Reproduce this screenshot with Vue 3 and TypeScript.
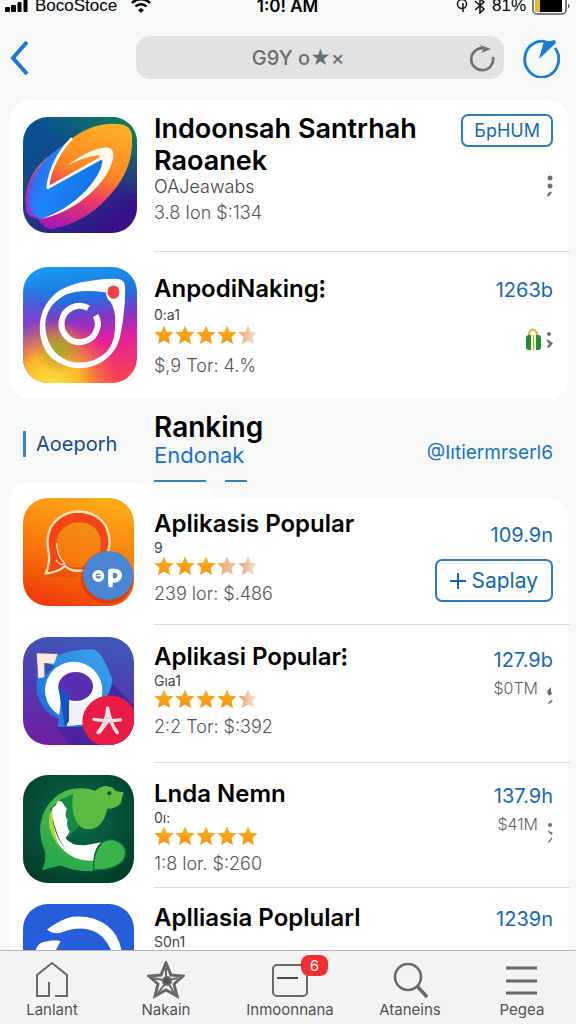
<script setup lang="ts">
type StarKind = 'full' | 'soft' | 'half'
type DotKind = 'three' | 'bag' | 'blob' | 'curl'

interface AppRow {
  id: string
  title: string
  sub: string
  stars: StarKind[]
  meta: string
  count?: string
  price?: string
  action?: string
  plus?: boolean
  dots?: DotKind
}

const featured: AppRow[] = [
  { id: 'swoosh', title: 'Indoonsah Santrhah Raoanek', sub: 'OAJeawabs', stars: [], meta: '3.8 Ion $:134', action: 'БpHUM', dots: 'three' },
  { id: 'camera', title: 'AnpodiNaking⁝', sub: '0:a1', stars: ['full', 'full', 'full', 'full', 'half'], meta: '$,9 Tor: 4.%', count: '1263b', dots: 'bag' },
]

const ranking: AppRow[] = [
  { id: 'chat', title: 'Aplikasis Popular', sub: '9', stars: ['full', 'full', 'full', 'soft', 'half'], meta: '239 lor: $.486', count: '109.9n', action: 'Saplay', plus: true },
  { id: 'ring', title: 'Aplikasi Popular⁝', sub: 'Gıa1', stars: ['full', 'full', 'full', 'full', 'half'], meta: '2:2 Tor: $:392', count: '127.9b', price: '$0TM', dots: 'blob' },
  { id: 'beast', title: 'Lnda Nemn', sub: '0ı:', stars: ['full', 'full', 'full', 'full', 'full'], meta: '1:8 lor. $:260', count: '137.9h', price: '$41M', dots: 'curl' },
  { id: 'wave', title: 'Aplliasia Poplularl', sub: 'S0n1', stars: ['full', 'full', 'full', 'full', 'full'], meta: '', count: '1239n' },
]

const sections = [
  { key: 'featured', rows: featured },
  { key: 'ranking', rows: ranking },
]

const tabs = [
  { id: 'home', label: 'Lanlant' },
  { id: 'star', label: 'Nakain' },
  { id: 'box', label: 'Inmoonnana', badge: '6' },
  { id: 'search', label: 'Ataneins' },
  { id: 'menu', label: 'Pegea' },
]

const starFill: Record<StarKind, string> = {
  full: 'url(#star-full)',
  soft: 'url(#star-soft)',
  half: 'url(#star-half)',
}
</script>

<template>
  <div class="app">
    <svg class="defs" width="0" height="0" aria-hidden="true">
      <defs>
        <linearGradient id="star-full" x1="0" y1="0" x2="0" y2="1"><stop offset="0" stop-color="#fbb023" /><stop offset="1" stop-color="#f7920f" /></linearGradient>
        <linearGradient id="star-soft"><stop offset="0" stop-color="#f2a468" /><stop offset="1" stop-color="#f3c9a4" /></linearGradient>
        <linearGradient id="star-half"><stop offset="0" stop-color="#ee9f58" /><stop offset=".5" stop-color="#efc5a4" /><stop offset="1" stop-color="#f1ebe8" /></linearGradient>
      </defs>
    </svg>

    <div class="status">
      <div class="status-side">
        <svg class="signal" viewBox="0 0 24 12" width="24" height="12" aria-hidden="true">
          <rect x="0" y="7" width="5" height="5" rx="1" /><rect x="6" y="5" width="5" height="7" rx="1" /><rect x="12.500" y="2" width="4" height="10" rx="1" /><rect x="18.500" y="-2" width="4" height="14" rx="1" />
        </svg>
        <span>BocoStoce</span>
        <svg class="wifi" viewBox="0 0 20 13" width="20" height="13" fill="none" stroke="#000" aria-hidden="true">
          <path d="M1 3C6-2 14-2 19 3" stroke-width="2.400" /><path d="M4.500 6.500c3-3 8-3 11 0" stroke-width="2.400" /><path d="M10 8l3 2-3 3-3-3z" fill="#000" stroke="none" />
        </svg>
      </div>
      <strong class="clock">1:0! AM</strong>
      <div class="status-side status-end">
        <svg viewBox="0 0 12 13" width="12" height="13" fill="none" stroke="#111" stroke-width="1.500" aria-hidden="true"><circle cx="6" cy="4" r="4.500" /><path d="M7 3v9" /></svg>
        <svg viewBox="0 0 12 14" width="12" height="14" fill="none" stroke="#111" stroke-width="1.500" aria-hidden="true"><path d="M1 1l9 8-4 4V-1l4 3-9 8" /></svg>
        <span>81%</span>
        <svg class="battery" viewBox="0 0 38 16" width="38" height="16" aria-hidden="true">
          <rect x="1" y="-6" width="33" height="20" rx="4" fill="#fff" stroke="#555" stroke-width="1.500" /><rect x="3" y="-4" width="6" height="16" fill="#e3bd24" /><rect x="8" y="-4" width="22" height="16" fill="#000" /><path d="M36 4c2 0 2 4 0 4z" fill="#555" />
        </svg>
      </div>
    </div>

    <header class="nav">
      <button class="back" type="button" aria-label="Back">
        <svg viewBox="0 0 20 36" width="20" height="36" fill="none" stroke="#1b78d3" stroke-width="4"><path d="M17 2L3 18l14 16" /></svg>
      </button>
      <div class="search">
        <input type="text" aria-label="Search" value="G9Y o★×" />
        <button class="reload" type="button" aria-label="Reload">
          <svg viewBox="0 0 26 28" width="26" height="28"><path d="M16 4.500A11 11 0 1 0 24 13" fill="none" stroke="#6f7072" stroke-width="2.600" /><path d="M10 0.500l12 4.500-10 4 3-4z" fill="#6f7072" /></svg>
        </button>
      </div>
      <button class="compass" type="button" aria-label="Browse">
        <svg viewBox="0 0 38 40" width="38" height="40"><path d="M28 5.500A17 18 0 1 0 33 10" fill="none" stroke="#1b7ed6" stroke-width="2.800" /><path d="M17 21L22 3h6l5-1 1 3z" fill="#1b7ed6" /></svg>
      </button>
    </header>

    <main class="content">
      <template v-for="section in sections" :key="section.key">
        <div v-if="section.key === 'ranking'" class="heading">
          <a class="side-link" href="#all">Aoeporh</a>
          <div class="heading-main">
            <h2>Ranking</h2>
            <a href="#endonak">Endonak</a>
            <div class="rules"><i></i><i></i></div>
          </div>
          <a class="handle" href="#handle">@Iıtiermrserl6</a>
        </div>

        <section class="card" :class="section.key">
          <article v-for="row in section.rows" :key="row.id" class="row" :class="row.id">
            <div class="icon">
              <svg v-if="row.id === 'swoosh'" viewBox="69 64 342 349" preserveAspectRatio="none" aria-hidden="true">
                <defs>
                  <linearGradient id="sw-bg" x1="0" y1="0" x2=".7" y2="1"><stop offset="0" stop-color="#04559a" /><stop offset=".5" stop-color="#174583" /><stop offset="1" stop-color="#38108a" /></linearGradient>
                  <linearGradient id="sw-gr" x1="0" y1=".8" x2="1" y2="0"><stop offset=".4" stop-color="#127e62" stop-opacity="0" /><stop offset="1" stop-color="#0b8a45" /></linearGradient>
                  <linearGradient id="sw-or" x1=".6" y1="0" x2=".3" y2="1"><stop offset="0" stop-color="#fdab25" /><stop offset=".42" stop-color="#fb8423" /><stop offset=".65" stop-color="#ef3a62" /><stop offset="1" stop-color="#a717b5" /></linearGradient>
                  <linearGradient id="sw-bl" x1="0" y1=".3" x2=".8" y2=".6"><stop offset="0" stop-color="#4b53e4" /><stop offset=".4" stop-color="#1b86fa" /><stop offset="1" stop-color="#1376ea" /></linearGradient>
                </defs>
                <rect x="69" y="64" width="342" height="349" fill="url(#sw-bg)" /><rect x="69" y="64" width="342" height="230" fill="url(#sw-gr)" />
                <path d="M108 365Q70 350 77 300Q88 224 150 180Q192 148 200 140Q276 77 356 85Q398 88 396 130Q400 220 330 299Q258 383 152 402Q132 400 108 365z" fill="url(#sw-or)" />
                <path d="M80 350Q70 270 125 205Q160 166 200 142Q150 205 143 278L310 187Q310 232 262 290Q200 350 123 370Q94 370 80 350z" fill="url(#sw-bl)" />
                <path d="M80 350Q69 282 115 215Q79 274 88 328Q96 366 123 369Q94 372 80 350z" fill="#a829d2" />
                <path d="M216 128Q152 195 143 277L303 188" fill="none" stroke="#fff9ec" stroke-width="8" stroke-linejoin="round" />
                <path d="M203 209Q270 160 318 155Q344 156 340 186Q328 243 270 295Q205 353 123 371Q200 345 258 285Q303 236 308 196L296 190Q304 178 292 179Q260 182 203 209z" fill="#fff9ec" />
              </svg>

              <svg v-else-if="row.id === 'camera'" viewBox="69 51 339 347" preserveAspectRatio="none" aria-hidden="true">
                <defs>
                  <linearGradient id="cm-bg" x1=".5" y1="0" x2=".65" y2="1"><stop offset="0" stop-color="#1698ec" /><stop offset=".27" stop-color="#246de0" /><stop offset=".45" stop-color="#8734c5" /><stop offset=".65" stop-color="#e61f9b" /><stop offset="1" stop-color="#fb4454" /></linearGradient>
                  <radialGradient id="cm-ye" cx=".25" cy="1.02" r=".58"><stop offset="0" stop-color="#ffe43a" /><stop offset=".45" stop-color="#fbb62a" /><stop offset="1" stop-color="#f08024" stop-opacity="0" /></radialGradient>
                  <radialGradient id="cm-gr" cx=".32" cy=".7" r=".22"><stop offset="0" stop-color="#9aae27" /><stop offset="1" stop-color="#b58a33" stop-opacity="0" /></radialGradient>
                  <radialGradient id="cm-le" cx="0" cy=".55" r=".4"><stop offset="0" stop-color="#7b45d4" stop-opacity=".9" /><stop offset="1" stop-color="#9b3ac9" stop-opacity="0" /></radialGradient>
                </defs>
                <rect x="69" y="51" width="339" height="347" fill="url(#cm-bg)" /><rect x="69" y="51" width="339" height="347" fill="url(#cm-le)" /><rect x="69" y="51" width="339" height="347" fill="url(#cm-ye)" /><rect x="69" y="51" width="339" height="347" fill="url(#cm-gr)" />
                <path fill-rule="evenodd" d="M347 86Q374 86 373 116Q373 180 360 248Q351 304 306 334Q274 354 234 354Q171 349 139 306Q116 270 119 222Q125 159 176 122Q216 99 266 93Q309 85 347 86zM316 127Q240 116 197 133Q137 164 135 225Q137 278 169 311Q202 338 240 337Q287 334 317 305Q345 276 343 213Q344 180 329 155Q316 144 316 127z" fill="#fff" />
                <path d="M263 174A54 54 0 1 0 285 196" fill="none" stroke="#fff" stroke-width="18" /><path d="M265 187l9-13M272 190l15-12" stroke="#4563d6" stroke-width="4" /><ellipse cx="338" cy="126" rx="18" ry="20" fill="#f33f45" />
              </svg>

              <svg v-else-if="row.id === 'chat'" viewBox="67 293 336 328" preserveAspectRatio="none" aria-hidden="true">
                <defs><linearGradient id="ch-bg" x1=".65" y1="0" x2=".35" y2="1"><stop offset="0" stop-color="#fda918" /><stop offset=".5" stop-color="#fc7c0a" /><stop offset="1" stop-color="#f13d0b" /></linearGradient><linearGradient id="ch-in" x1=".6" y1="0" x2=".3" y2="1"><stop offset="0" stop-color="#f28f14" /><stop offset="1" stop-color="#fb720b" /></linearGradient></defs>
                <rect x="67" y="293" width="336" height="328" fill="url(#ch-bg)" />
                <path d="M140 532L195 505L258 513L225 535z" fill="#cf3009" opacity=".25" />
                <path d="M136 522Q150 488 145 460Q135 419 151 382Q180 335 237 334Q297 338 320 383Q339 429 318 474Q291 515 231 514Q211 514 194 499Q175 519 136 522z" fill="#f54516" stroke="#ffe4b8" stroke-width="7" />
                <path d="M167 432Q172 385 218 369Q278 361 298 404Q312 454 284 487Q234 518 195 493Q171 478 167 432z" fill="url(#ch-in)" /><path d="M169 430Q169 469 193 491Q181 502 166 480" fill="none" stroke="#ffe4b8" stroke-width="4" />
                <ellipse cx="322" cy="535" rx="80" ry="79" fill="#c92d0e" opacity=".55" /><ellipse cx="325" cy="528" rx="76" ry="74" fill="#4b86d5" />
                <ellipse cx="295" cy="530" rx="13" ry="13" fill="none" stroke="#fff" stroke-width="10" /><path d="M290 529h14" stroke="#fff" stroke-width="4" /><path fill-rule="evenodd" d="M325 511q8-6 20-3q25 3 21 24q-5 20-27 18l-1 14h-10q-5-2-3-53zm14 9v17q13 2 14-9q-1-9-14-8z" fill="#fff" />
              </svg>

              <svg v-else-if="row.id === 'ring'" viewBox="69 49 333 328" preserveAspectRatio="none" aria-hidden="true">
                <defs><linearGradient id="ri-bg" x1=".6" y1="0" x2=".4" y2="1"><stop offset="0" stop-color="#3f58b8" /><stop offset=".5" stop-color="#513bb0" /><stop offset="1" stop-color="#6e20a4" /></linearGradient><linearGradient id="ri-bl" x1="1" y1="0" x2="0" y2="1"><stop offset="0" stop-color="#3ba7ed" /><stop offset="1" stop-color="#1768d9" /></linearGradient></defs>
                <rect x="69" y="49" width="333" height="328" fill="url(#ri-bg)" /><path d="M335 190L402 255V377H210L170 322z" fill="#46209a" opacity=".75" />
                <path d="M171 105Q225 84 279 86Q296 91 312 119L336 174Q338 200 320 233L260 322H174L177 300Q125 275 110 217V160L120 130z" fill="url(#ri-bl)" />
                <path d="M110 98L173 101L162 130L133 128L133 171L115 174z" fill="#ffe8dc" /><path d="M133 128L166 137L136 165z" fill="#3155b2" />
                <ellipse cx="221" cy="211" rx="86" ry="87" fill="#fff" /><path d="M201 250V320L263 313V245z" fill="#f0f1fb" />
                <ellipse cx="227" cy="199" rx="52" ry="44" fill="#582fb1" /><path d="M174 200Q182 235 182 248L174 322H194L208 250L207 225z" fill="#287ee4" /><path d="M176 202Q192 218 207 221V305L195 322L186 270z" fill="#1551c5" />
                <ellipse cx="329" cy="305" rx="82" ry="78" fill="#e91d43" /><path d="M323 265Q320 308 294 340M323 265Q332 315 352 340M282 299Q323 305 361 301M322 307L298 338" fill="none" stroke="#ffe4e6" stroke-width="10" stroke-linecap="round" />
              </svg>

              <svg v-else-if="row.id === 'beast'" viewBox="69 44 334 321" preserveAspectRatio="none" aria-hidden="true">
                <defs><radialGradient id="be-bg" cx=".5" cy=".4" r=".8"><stop offset="0" stop-color="#076d48" /><stop offset=".5" stop-color="#045039" /><stop offset="1" stop-color="#023421" /></radialGradient><linearGradient id="be-gr" x1=".7" y1="0" x2=".2" y2="1"><stop offset="0" stop-color="#61bf40" /><stop offset="1" stop-color="#24a84a" /></linearGradient></defs>
                <rect x="69" y="44" width="334" height="321" fill="url(#be-bg)" />
                <path d="M126 328Q143 289 132 263Q111 213 128 164Q151 106 209 87Q255 78 286 91Q302 77 319 77Q338 78 347 91L372 96Q366 112 364 127Q347 145 323 144Q315 171 306 184Q288 211 259 204Q228 198 221 158L189 112L151 145L158 216L200 270L285 292L281 329Q231 334 181 313Q156 319 126 328z" fill="url(#be-gr)" />
                <path d="M180 118L222 100Q215 160 238 195L205 230L180 200z" fill="#168a45" />
                <path d="M222 88Q210 145 228 180Q246 213 279 203Q315 190 321 144Q285 150 272 88z" fill="#5abb43" />
                <path d="M157 143L168 133L173 122Q186 118 194 136L201 145Q192 164 203 177Q198 195 210 212L197 231Q213 254 256 253L304 244Q283 262 281 298Q226 303 187 264Q151 223 157 143z" fill="#fff" /><path d="M157 143Q128 194 181 261Q157 211 157 143z" fill="#acd83c" /><path d="M158 170Q161 230 214 283Q174 245 158 170z" fill="#195d35" />
                <path d="M282 326Q278 276 307 244Q339 225 369 252Q388 277 367 302Q338 328 282 326z" fill="#37b54a" stroke="#11713a" stroke-width="4" /><circle cx="329" cy="98" r="6" fill="#17463a" />
              </svg>

              <svg v-else viewBox="69 430 334 321" preserveAspectRatio="none" aria-hidden="true">
                <rect x="69" y="430" width="334" height="321" fill="#245edb" /><path d="M141 506Q181 476 218 468Q280 462 323 495Q366 530 367 590L342 588Q325 535 290 515Q244 491 185 515Q158 521 141 506z" fill="#fff" /><path d="M106 587Q102 544 143 541Q168 535 182 541L153 594z" fill="#fff" />
              </svg>
            </div>

            <div class="info">
              <h3>{{ row.title }}</h3>
              <p class="sub">{{ row.sub }}</p>
              <div v-if="row.stars.length" class="stars" role="img" aria-label="Rating">
                <svg v-for="(kind, i) in row.stars" :key="i" viewBox="0 0 20 20" width="20" height="20">
                  <path d="M10 0.500l2.700 6.200 7 .6-5.200 4.700 1.500 7L10 15.500 4 19l1.500-7L.3 7.300l7-.6z" :fill="starFill[kind]" />
                </svg>
              </div>
              <p class="meta">{{ row.meta }}</p>
            </div>

            <div class="aside">
              <span v-if="row.count" class="count">{{ row.count }}</span>
              <button v-if="row.action" class="action" :class="{ wide: row.plus }" type="button">
                <svg v-if="row.plus" viewBox="0 0 16 16" width="16" height="16" fill="none" stroke="currentColor" stroke-width="2"><path d="M8 0v16M0 8h16" /></svg>{{ row.action }}
              </button>
              <div class="extra">
                <span v-if="row.price">{{ row.price }}</span>
                <svg v-if="row.dots === 'bag'" viewBox="0 0 15 23" width="15" height="23" aria-hidden="true">
                  <path d="M3 8V5q4-7 8 0v3" fill="none" stroke="#e9b33b" stroke-width="2" /><rect x="0" y="7" width="15" height="15" rx="3" fill="#258b3b" /><rect x="5" y="6" width="5" height="17" fill="#fbf3cf" /><path d="M7.500 7v15" stroke="#9cb64d" />
                </svg>
                <button v-if="row.dots" class="more" type="button" :aria-label="'More about ' + row.title">
                  <svg viewBox="0 0 6 22" width="6" height="22" fill="#707070">
                    <template v-if="row.dots === 'three'"><circle cx="3" cy="3" r="2.500" /><circle cx="3" cy="11" r="2.500" /><path d="M0 20q2-4 5-3l-1 2-3 3z" /></template>
                    <template v-else-if="row.dots === 'bag'"><circle cx="2" cy="5" r="2" /><path d="M0 10l6 4-4 5-2-1 2-3-2-3z" /></template>
                    <template v-else-if="row.dots === 'blob'"><path d="M1 4l3-3v4l1 3-3 2-2-4z" /><path d="M1 18q1-4 5-4l-2 3z" /></template>
                    <template v-else><circle cx="3" cy="3" r="2" /><path d="M0 8l6 3-2 2z" /><path d="M1 20l4-5v2l-3 4z" /></template>
                  </svg>
                </button>
              </div>
            </div>
          </article>
        </section>
      </template>
    </main>

    <nav class="tabs" aria-label="Main">
      <button v-for="tab in tabs" :key="tab.id" class="tab" type="button">
        <span class="tab-icon">
          <svg viewBox="0 0 38 38" width="38" height="38" fill="none" stroke="#67686a" stroke-width="2" aria-hidden="true">
            <path v-if="tab.id === 'home'" d="M16 21v14H4V14L19 2l15 12v21H22" />
            <template v-else-if="tab.id === 'star'"><path d="M19 2l5 12 12 1-9 8 3 12-11-6-11 6 3-12-9-8 12-1z" stroke-width="3" /><circle cx="20" cy="20" r="4" fill="#555" /><path d="M19 7v10M31 17l-9 2M11 32l7-9M27 32l-5-9M6 17l10 2" /></template>
            <template v-else-if="tab.id === 'box'"><rect x="2" y="4" width="34" height="31" rx="4" /><path d="M6 17h21" stroke="#47475a" /></template>
            <template v-else-if="tab.id === 'search'"><circle cx="17" cy="16" r="13" stroke-width="2.500" /><path d="M26 25l10 11" stroke-width="3.500" /></template>
            <path v-else d="M3 7h31M3 20h31M3 32h31" stroke-width="3" />
          </svg>
          <span v-if="tab.badge" class="badge">{{ tab.badge }}</span>
        </span>
        <span>{{ tab.label }}</span>
      </button>
    </nav>
  </div>
</template>

<style>
body { margin: 0; }
</style>

<style scoped>
* { box-sizing: border-box; }
.app { height: 100vh; display: flex; flex-direction: column; overflow: hidden; background: #f7f8f8; color: #000; font-family: Inter, "Liberation Sans", sans-serif; }
.defs { position: absolute; }
h2, h3, p { margin: 0; font-weight: inherit; }
button { border: 0; padding: 0; background: none; font: inherit; color: inherit; cursor: pointer; }
a { color: #1973c2; text-decoration: none; }
svg { display: block; flex: none; }

.status { flex: none; height: 24px; padding: 0 6px 0 5px; display: grid; grid-template-columns: 1fr auto 1fr; font: 17px/12px "Liberation Sans", sans-serif; }
.status-side { display: flex; align-items: flex-start; gap: 6px; }
.status-end { justify-content: flex-end; }
.wifi { margin-left: 8px; }
.clock { font: 600 17px/12px Inter, sans-serif; }

.nav { flex: none; height: 76px; padding: 12px 16px 0 10px; display: flex; align-items: flex-start; }
.back { width: 126px; height: 43px; display: flex; align-items: center; }
.search { flex: 1; min-width: 0; height: 43px; padding: 0 9px; display: flex; align-items: center; border-radius: 14px; background: #e1e2e3; }
.search input { flex: 1; min-width: 0; padding: 0 36px 0 18px; border: 0; outline: 0; background: none; text-align: center; color: #6b6c6e; font: 500 20px/28px Inter, "DejaVu Sans", sans-serif; }
.compass { width: 38px; height: 43px; margin-left: 18px; display: flex; align-items: center; }

.content { flex: 1; min-height: 0; overflow: hidden; }
.card { position: relative; margin: 0 8px 0 10px; border-radius: 20px; background: #fff; }
.card.ranking { border-radius: 0 20px 0 0; }
.card.ranking::before { content: ""; position: absolute; left: 0; bottom: 100%; width: 208px; height: 15px; border-radius: 20px 0 0 0; background: #fff; clip-path: polygon(0 0, 132px 0, 144px 100%, 0 100%); }
.card.ranking::after { content: ""; position: absolute; left: 132px; bottom: 100%; width: 76px; height: 15px; background: #fcfcfc; clip-path: polygon(0 0, 66px 0, 76px 100%, 12px 100%); }
.row { position: relative; display: grid; grid-template-columns: 131px minmax(0, 1fr) auto; align-items: start; padding: 0 15px 0 13px; }
.row + .row::before { content: ""; position: absolute; top: 0; left: 144px; right: -2px; height: 1px; background: #d9dadb; }
.icon { width: 111px; height: 108px; overflow: hidden; border-radius: 25px; }
.icon svg { width: 100%; height: 100%; }
.featured .icon { width: 114px; height: 116px; }
h3 { font-size: 24px; line-height: 32px; font-weight: 600; }
.sub { font-size: 14px; line-height: 16px; color: #444; }
.featured .sub { line-height: 20px; }
.stars { display: flex; gap: 1px; }
.meta { margin-top: 6px; font-size: 18px; line-height: 24px; font-weight: 300; color: #555; white-space: nowrap; }
.aside { display: flex; flex-direction: column; align-items: flex-end; }
.count { font-size: 20px; line-height: 24px; color: #1468b5; }
.action { height: 33px; padding: 0 11px; border: 2px solid #2a7cc0; border-radius: 7px; color: #1468b5; font-size: 18px; display: flex; align-items: center; gap: 6px; }
.action.wide { height: 43px; margin-top: 12px; padding: 0 13px; font-size: 21px; }
.extra { margin-top: 6px; display: flex; gap: 9px; font-size: 16px; line-height: 20px; font-weight: 300; color: #606060; }

.swoosh { height: 151px; }
.swoosh .icon { margin-top: 17px; }
.swoosh .info { padding-top: 13px; }
.swoosh h3 { font-size: 27px; }
.swoosh .sub { font-size: 18px; font-weight: 300; }
.swoosh .meta { margin-top: 4px; }
.swoosh .aside { padding-top: 14px; }
.swoosh .extra { margin-top: 28px; }
.camera { height: 148px; }
.camera .icon { margin-top: 16px; }
.camera .info { padding-top: 22px; }
.camera .meta { margin-top: 9px; }
.camera .aside { padding-top: 27px; }
.camera .extra { margin-top: 26px; gap: 6px; }
.chat { height: 126px; }
.chat .info { padding-top: 10px; }
.chat .aside { padding-top: 25px; }
.ring { height: 138px; }
.ring .icon { margin-top: 13px; }
.ring .info { padding-top: 17px; }
.ring .aside { padding-top: 24px; }
.beast { height: 125px; }
.beast .icon { margin-top: 13px; }
.beast .info { padding-top: 16px; }
.beast .aside { padding-top: 22px; }
.ring .more, .beast .more { padding-top: 8px; }
.wave { height: 138px; }
.wave .icon { margin-top: 17px; }
.wave .info { padding-top: 15px; }
.wave .aside { padding-top: 20px; }

.heading { height: 99px; margin: 0 8px 0 10px; padding: 12px 15px 0 13px; display: grid; grid-template-columns: 131px 1fr auto; align-items: start; }
.side-link { margin-top: 20px; padding-left: 10px; border-left: 3px solid #2e86d1; line-height: 26px; font-size: 20px; color: #174a86; }
.heading h2 { font-size: 28px; line-height: 32px; font-weight: 600; }
.heading-main a { display: block; font-size: 22px; line-height: 24px; }
.rules { margin-top: 13px; display: flex; gap: 19px; }
.rules i { width: 52px; height: 2px; background: #3c7fc0; }
.rules i + i { width: 22px; }
.handle { margin-top: 30px; font-size: 19px; line-height: 24px; }

.tabs { flex: none; height: 74px; border-top: 1px solid #b5b6b7; background: #f3f3f3; display: grid; grid-template-columns: 26fr 31fr 31fr 29fr 27fr; }
.tab { display: flex; flex-direction: column; align-items: center; padding-top: 10px; font-size: 15px; line-height: 22px; color: #505153; }
.tab-icon { position: relative; }
.badge { position: absolute; left: 30px; top: -6px; width: 27px; height: 21px; border-radius: 8px; background: #f12e30; color: #fff; font-size: 15px; line-height: 21px; text-align: center; }
</style>
